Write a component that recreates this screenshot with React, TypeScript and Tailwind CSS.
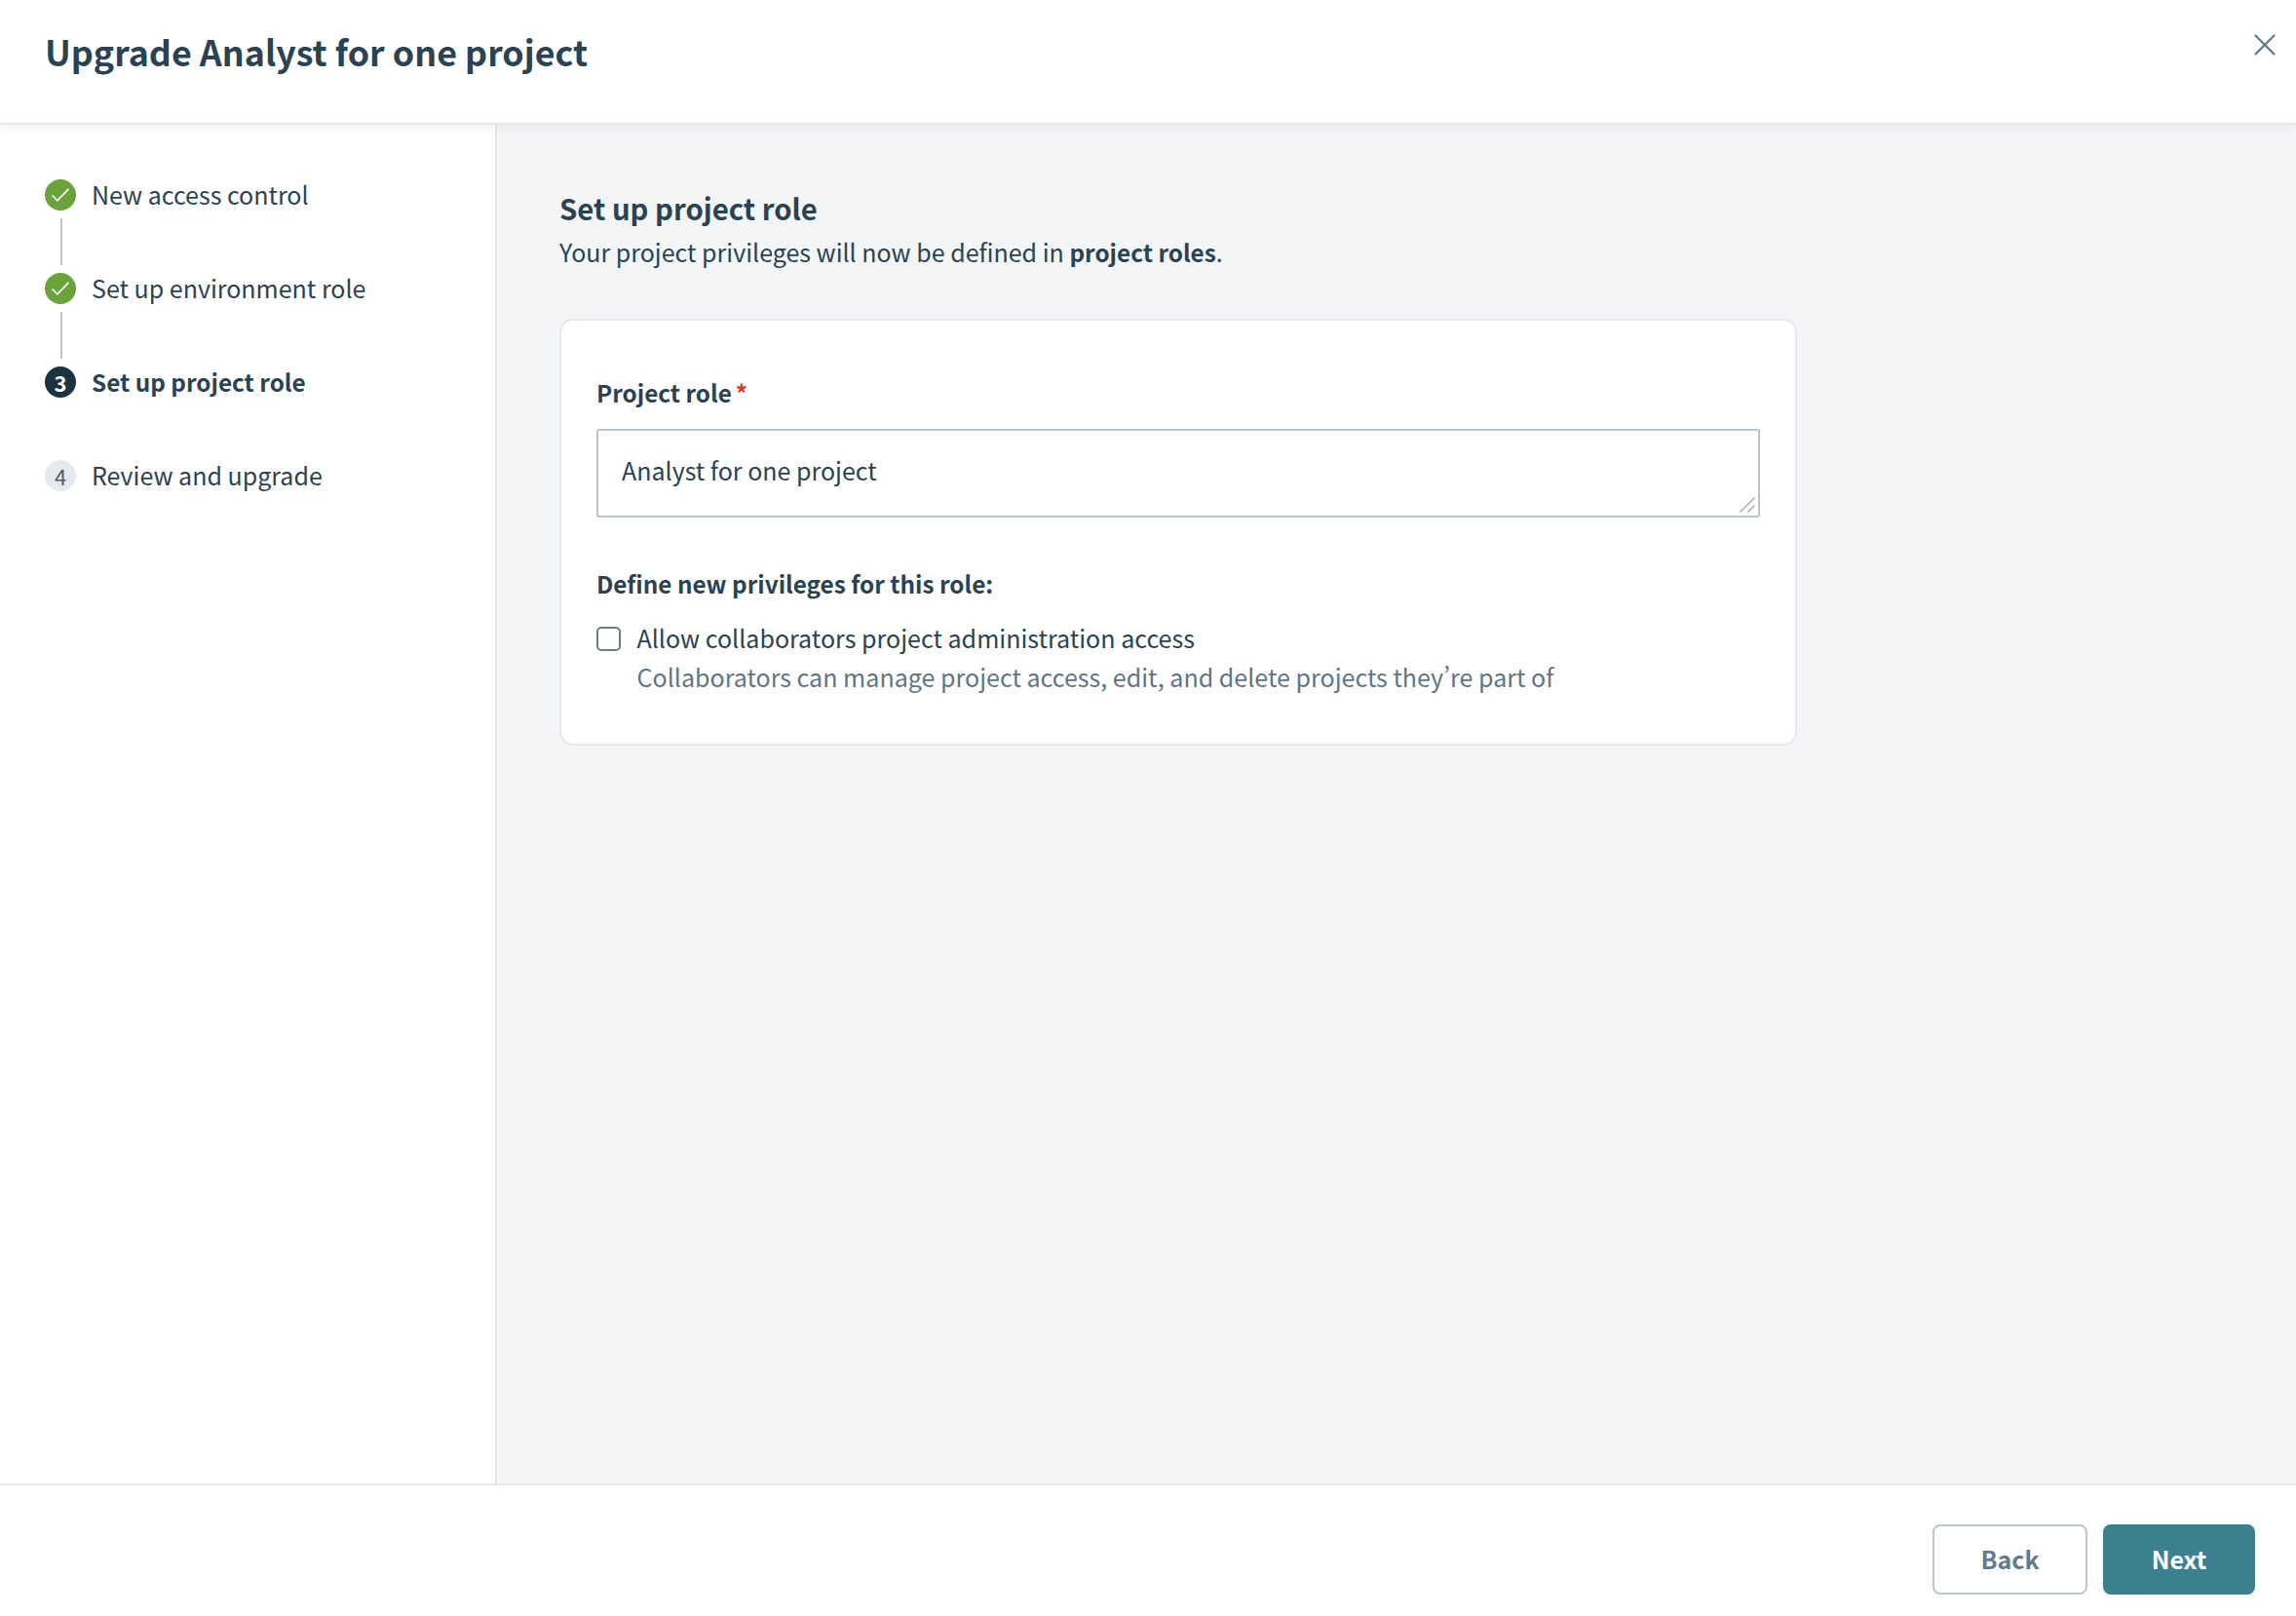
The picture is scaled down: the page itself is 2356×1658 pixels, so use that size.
import { X } from 'lucide-react';

const steps = [
  { label: 'New access control', state: 'done' },
  { label: 'Set up environment role', state: 'done' },
  { label: 'Set up project role', state: 'active' },
  { label: 'Review and upgrade', state: 'todo' },
];

function StepBadge({ state, index }: { state: string; index: number }) {
  if (state === 'done') {
    return (
      <div className="w-8 h-8 shrink-0 rounded-full bg-[#6aa33c] flex items-center justify-center">
        <svg width="18" height="14" viewBox="0 0 18 14" fill="none">
          <path d="M0.6 7.5l5.2 5.3L17.4 0.8" stroke="white" strokeWidth="1.7" />
        </svg>
      </div>
    );
  }
  if (state === 'active') {
    return (
      <div className="w-8 h-8 shrink-0 rounded-full bg-[#1b3240] flex items-center justify-center text-white text-[22px] font-bold leading-none">
        {index}
      </div>
    );
  }
  return (
    <div className="w-8 h-8 shrink-0 rounded-full bg-[#e6e9ed] flex items-center justify-center text-[#4a5f6c] text-[22px] leading-none">
      {index}
    </div>
  );
}

export default function App() {
  return (
    <div className="h-[1658px] flex flex-col bg-white text-[#2b4251] font-['Noto_Sans_CJK_SC','Source_Sans_Pro','Open_Sans',sans-serif]">
      <header className="h-[128px] shrink-0 relative z-10 flex items-start justify-between pl-[46px] pr-[13px] border-b-2 border-[#e4e8ec] shadow-[0_4px_10px_rgba(40,60,75,0.05)]">
        <h1 className="mt-[27px] text-[35.8px] leading-[50px] font-semibold">Upgrade Analyst for one project</h1>
        <X className="mt-[27px] w-[38px] h-[38px] text-[#64798a]" strokeWidth={1.4} />
      </header>

      <div className="flex-1 flex min-h-0">
        <aside className="w-[510px] shrink-0 border-r-2 border-[#e4e8ec] pt-[56px] pl-[46px]">
          {steps.map((s, i) => (
            <div key={s.label}>
              <div className="flex items-center gap-4 h-8">
                <StepBadge state={s.state} index={i + 1} />
                <span className={`leading-8 ${s.state === 'active' ? 'text-[24.3px] font-semibold' : '-mt-[2px] text-[25px]'}`}>{s.label}</span>
              </div>
              <div className="h-16 pt-2 pl-[16px]">
                {s.state === 'done' && <div className="w-0.5 h-12 bg-[#bcc6cf]" />}
              </div>
            </div>
          ))}
        </aside>

        <main className="flex-1 bg-[#f3f5f7] pt-[65px] pl-[64px]">
          <h2 className="text-[29.3px] leading-[40px] font-semibold">Set up project role</h2>
          <p className="mt-[6px] text-[25px] leading-[38px]">
            Your project privileges will now be defined in <b className="text-[24.3px] font-semibold">project roles</b>.
          </p>

          <section className="mt-[49px] w-[1270px] h-[438px] bg-white border-2 border-[#e6e9ed] rounded-[14px] px-[36px] pt-[56px]">
            <label className="block text-[24.3px] leading-9 font-semibold">
              Project role<span className="ml-[4px] text-[#cf3f2a]">*</span>
            </label>
            <div className="relative mt-[19px] w-[1194px] h-[91px]">
              <textarea
                className="block w-full h-full resize-none border-2 border-[#b9c4cd] rounded-[3px] px-[24px] py-[19px] text-[25px] leading-[42px] outline-none"
                defaultValue="Analyst for one project"
              />
              <svg className="absolute right-[5px] bottom-[5px]" width="16" height="16" viewBox="0 0 16 16" fill="none">
                <path d="M0.5 15.5L15.5 0.5M8.5 15.5L15.5 8.5" stroke="#a9a9a9" strokeWidth="1.5" />
              </svg>
            </div>
            <div className="mt-[50px] text-[24.3px] leading-9 font-semibold">Define new privileges for this role:</div>
            <div className="mt-[18px] flex gap-[16.5px]">
              <input type="checkbox" className="appearance-none mt-[8px] w-[25px] h-[25px] shrink-0 border-2 border-[#6f7c86] rounded-[5px] bg-white" />
              <div>
                <div className="text-[25.05px] leading-[38px]">Allow collaborators project administration access</div>
                <div className="mt-px text-[25.05px] leading-[41px] text-[#5f7585] [font-feature-settings:'pwid']">Collaborators can manage project access, edit, and delete projects they’re part of</div>
              </div>
            </div>
          </section>
        </main>
      </div>

      <footer className="h-[136px] shrink-0 border-t-2 border-[#e4e8ec] flex items-start justify-end gap-4 pt-[40px] pr-[42px]">
        <button className="w-[159px] h-[72px] border-2 border-[#bcc6cf] rounded-lg bg-white text-[#64798a] text-[25px] font-semibold">Back</button>
        <button className="w-[156px] h-[72px] rounded-lg bg-[#3c7f8f] text-white text-[25px] font-semibold">Next</button>
      </footer>
    </div>
  );
}
